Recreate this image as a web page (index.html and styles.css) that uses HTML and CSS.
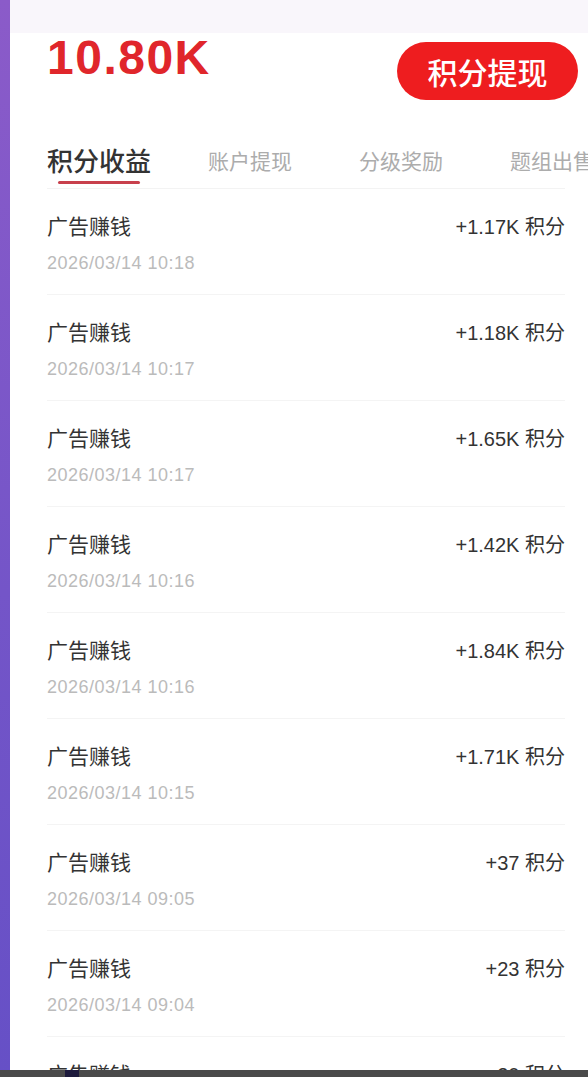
FILE: index.html
```html
<!DOCTYPE html>
<html lang="zh-CN">
<head>
    <meta charset="UTF-8">
    <meta name="viewport" content="width=device-width, initial-scale=1.0">
    <title>积分收益</title>
    <link rel="stylesheet" href="styles.css">
</head>
<body>

    <div class="edge"></div>

    <div class="page">
        <div class="top-band"></div>

        <!-- Balance + withdraw -->
        <div class="header">
            <div class="balance">10.80K</div>
            <button class="withdraw-btn">积分提现</button>
        </div>

        <!-- Tabs -->
        <div class="tabs">
            <div class="tab active">积分收益</div>
            <div class="tab">账户提现</div>
            <div class="tab">分级奖励</div>
            <div class="tab">题组出售</div>
        </div>

        <!-- Records -->
        <ul class="records">
            <li class="record">
                <div class="record-main"><span class="record-title">广告赚钱</span><span class="record-amount">+1.17K 积分</span></div>
                <div class="record-date">2026/03/14 10:18</div>
            </li>
            <li class="record">
                <div class="record-main"><span class="record-title">广告赚钱</span><span class="record-amount">+1.18K 积分</span></div>
                <div class="record-date">2026/03/14 10:17</div>
            </li>
            <li class="record">
                <div class="record-main"><span class="record-title">广告赚钱</span><span class="record-amount">+1.65K 积分</span></div>
                <div class="record-date">2026/03/14 10:17</div>
            </li>
            <li class="record">
                <div class="record-main"><span class="record-title">广告赚钱</span><span class="record-amount">+1.42K 积分</span></div>
                <div class="record-date">2026/03/14 10:16</div>
            </li>
            <li class="record">
                <div class="record-main"><span class="record-title">广告赚钱</span><span class="record-amount">+1.84K 积分</span></div>
                <div class="record-date">2026/03/14 10:16</div>
            </li>
            <li class="record">
                <div class="record-main"><span class="record-title">广告赚钱</span><span class="record-amount">+1.71K 积分</span></div>
                <div class="record-date">2026/03/14 10:15</div>
            </li>
            <li class="record">
                <div class="record-main"><span class="record-title">广告赚钱</span><span class="record-amount">+37 积分</span></div>
                <div class="record-date">2026/03/14 09:05</div>
            </li>
            <li class="record">
                <div class="record-main"><span class="record-title">广告赚钱</span><span class="record-amount">+23 积分</span></div>
                <div class="record-date">2026/03/14 09:04</div>
            </li>
            <li class="record">
                <div class="record-main"><span class="record-title">广告赚钱</span><span class="record-amount">+20 积分</span></div>
                <div class="record-date">2026/03/14 09:03</div>
            </li>
        </ul>
    </div>

    <!-- Bottom system bar -->
    <div class="bottom-bar"><span class="bottom-mark"></span></div>

</body>
</html>
```

FILE: styles.css
```css
/* Reset & font */
html, body {
    margin: 0;
    padding: 0;
    height: 1077px;
    overflow: hidden;
    font-family: "Liberation Sans", "Noto Sans CJK SC", sans-serif;
    color: #333;
    background-color: #fff;
}

body {
    display: flex;
}

/* Purple left edge */
.edge {
    flex: 0 0 10px;
    background: linear-gradient(180deg, #8b5bc9 0%, #7455c8 55%, #6650c6 100%);
}

.page {
    flex: 1;
    min-width: 0;
    overflow: hidden;
    background-color: #fff;
}

.top-band {
    height: 33px;
    background-color: #f9f6fb;
}

/* Header: balance + button */
.header {
    display: flex;
    justify-content: space-between;
    align-items: flex-start;
    padding: 1px 10px 0 37px;
}

.balance {
    font-size: 48px;
    line-height: 48px;
    font-weight: bold;
    color: #e0262b;
    letter-spacing: 1.5px;
}

.withdraw-btn {
    margin-top: 8px;
    width: 181px;
    height: 58px;
    border: none;
    border-radius: 29px;
    background-color: #ee1d1f;
    color: #fff;
    font-family: "Noto Sans CJK SC", sans-serif;
    font-size: 30px;
    font-weight: 500;
    padding: 0;
    cursor: pointer;
}

/* Tabs */
.tabs {
    display: flex;
    margin: 0 23px 0 37px;
    padding-top: 44px;
    padding-bottom: 4px;
    border-bottom: 1px solid #f3f3f3;
    white-space: nowrap;
}

.tab {
    flex: 0 0 152px;
    margin-left: -1px;
    text-align: center;
    font-size: 21px;
    line-height: 36px;
    color: #acacac;
}

.tab:first-child {
    margin-left: -24px;
}

.tab.active {
    font-size: 26px;
    font-weight: 500;
    color: #333;
}

.tab.active::after {
    content: "";
    display: block;
    width: 82px;
    height: 3px;
    margin: 1px auto 0;
    border-radius: 2px;
    background-color: #c8404c;
}

/* Record list */
.records {
    list-style: none;
    margin: 0 23px 0 37px;
    padding: 0;
}

.record {
    padding: 22px 0 19px;
    border-bottom: 1px solid #f4f4f4;
}

.record-main {
    display: flex;
    justify-content: space-between;
    align-items: center;
    height: 28px;
}

.record-title {
    font-size: 21px;
    color: #333;
}

.record-amount {
    font-size: 20px;
    color: #333;
}

.record-date {
    margin-top: 12px;
    font-size: 18px;
    line-height: 24px;
    letter-spacing: 0.5px;
    color: #bbb;
}

/* Bottom bar overlays the list */
.bottom-bar {
    position: fixed;
    left: 0;
    right: 0;
    bottom: 0;
    height: 7px;
    background-color: #4a4a4a;
}

.bottom-mark {
    position: absolute;
    left: 65px;
    top: 0;
    width: 14px;
    height: 7px;
    background-color: #1d1a3c;
}
```
